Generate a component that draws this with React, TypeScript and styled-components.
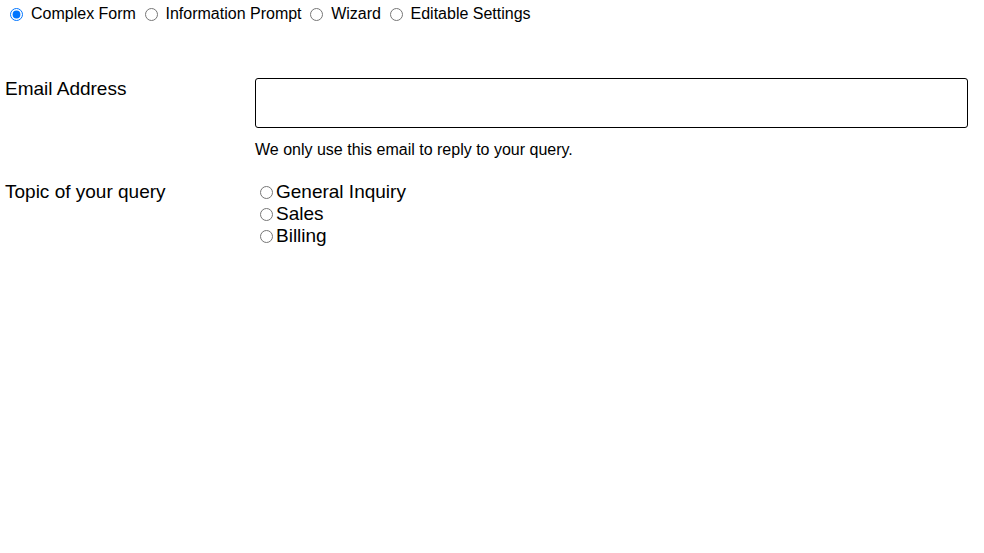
import React, { useState } from 'react'
import styled, { createGlobalStyle } from 'styled-components'

const GlobalStyle = createGlobalStyle`
  body {
    margin: 0;
    background: #ffffff;
    font-family: "Liberation Sans", Arial, sans-serif;
    color: #000000;
  }
`

const Page = styled.div`
  padding: 5px 16px 0 5px;
`

const ModeBar = styled.div`
  display: flex;
  align-items: center;
  gap: 3.6px;
  font-size: 16px;
  line-height: 18px;
`

const ModeOption = styled.label`
  display: inline-flex;
  align-items: center;
`

const Radio = styled.input`
  margin: 1px 3px 0 5px;
  width: 13px;
  height: 13px;
`

const ModeRadio = styled(Radio)`
  margin: 0 8px 0 5px;
`

const Form = styled.div`
  display: grid;
  grid-template-columns: 250px 1fr;
  row-gap: 22px;
  margin-top: 55px;
`

const FieldLabel = styled.div`
  font-size: 19px;
  line-height: 22px;
`

const FieldBody = styled.div`
  display: flex;
  flex-direction: column;
`

const TextInput = styled.input`
  box-sizing: border-box;
  height: 50px;
  width: 100%;
  border: 1px solid #000;
  border-radius: 3px;
  font-size: 16px;
  font-family: inherit;
`

const Hint = styled.div`
  font-size: 16px;
  line-height: 18px;
  margin-top: 13px;
`

const Choice = styled.label`
  display: flex;
  align-items: center;
  font-size: 19px;
  line-height: 22px;
`

const modes = ['Complex Form', 'Information Prompt', 'Wizard', 'Editable Settings']
const topics = ['General Inquiry', 'Sales', 'Billing']

export default function App() {
  const [mode, setMode] = useState('Complex Form')
  const [topic, setTopic] = useState('')
  const [email, setEmail] = useState('')

  return (
    <Page>
      <GlobalStyle />
      <ModeBar>
        {modes.map((m) => (
          <ModeOption key={m}>
            <ModeRadio type="radio" name="mode" checked={mode === m} onChange={() => setMode(m)} />
            {m}
          </ModeOption>
        ))}
      </ModeBar>
      <Form>
        <FieldLabel>Email Address</FieldLabel>
        <FieldBody>
          <TextInput type="email" value={email} onChange={(e) => setEmail(e.target.value)} />
          <Hint>We only use this email to reply to your query.</Hint>
        </FieldBody>
        <FieldLabel>Topic of your query</FieldLabel>
        <FieldBody>
          {topics.map((t) => (
            <Choice key={t}>
              <Radio type="radio" name="topic" checked={topic === t} onChange={() => setTopic(t)} />
              {t}
            </Choice>
          ))}
        </FieldBody>
      </Form>
    </Page>
  )
}
